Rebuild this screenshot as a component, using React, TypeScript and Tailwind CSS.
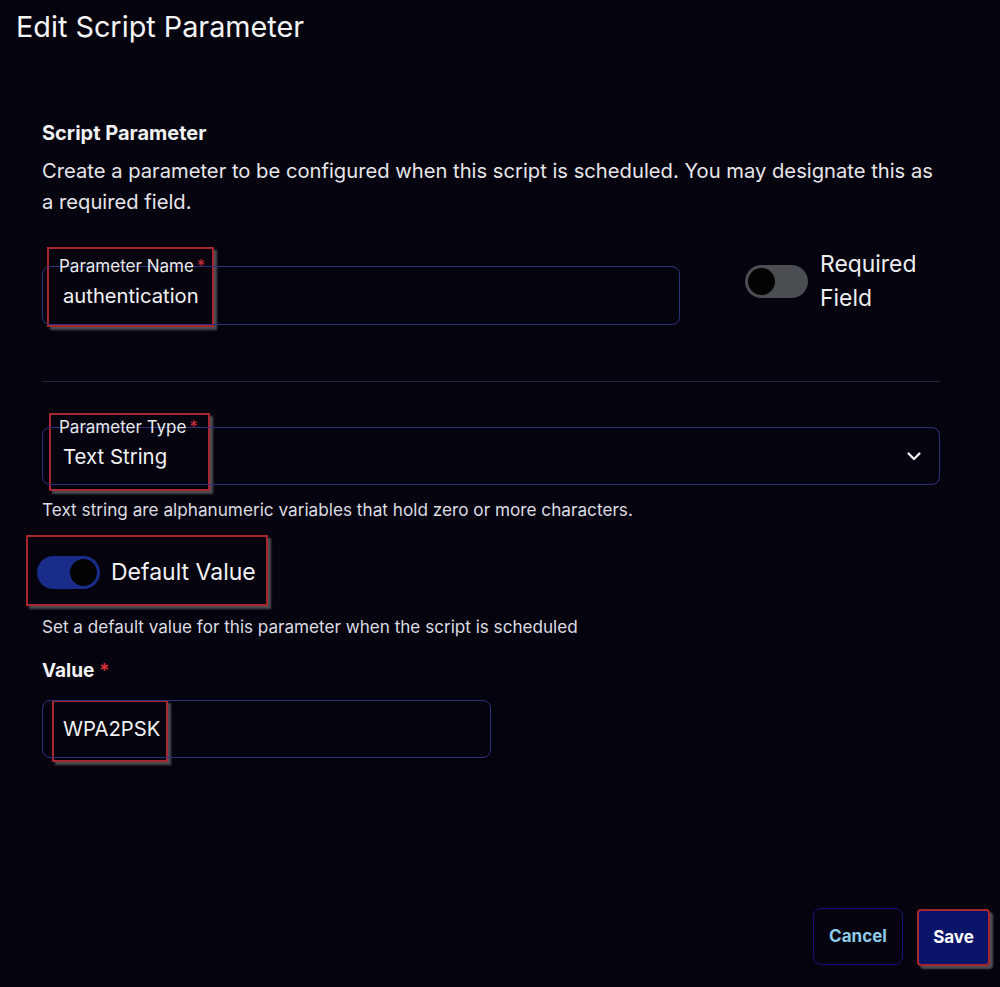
import React from "react";

const font = { fontFamily: "Inter, 'Noto Sans', 'Liberation Sans', sans-serif" };

function Annot({ className }: { className: string }) {
  return (
    <div
      className={`absolute border-2 border-[#a8262f] bg-[#05040e] shadow-[3px_3px_2px_rgba(90,90,95,0.85)] ${className}`}
    />
  );
}

export default function App() {
  return (
    <div className="relative w-[1000px] h-[987px] bg-[#05040e] text-[#f2f2f4] overflow-hidden" style={font}>
      {/* annotation boxes (under text) */}
      <Annot className="left-[47px] top-[247px] w-[167px] h-[80px]" />
      <Annot className="left-[49px] top-[413px] w-[161px] h-[78px]" />
      <Annot className="left-[26px] top-[535px] w-[242px] h-[71px]" />
      <Annot className="left-[52px] top-[700px] w-[116px] h-[62px]" />

      <div className="relative z-10">
        <h1 className="pl-[16px] pt-[10px] text-[28.8px] leading-[34px] font-normal text-[#f4f4f6]">
          Edit Script Parameter
        </h1>

        <div className="pl-[42px] pr-[60px]">
          <div className="mt-[77px] text-[20px] leading-[24px] font-bold">Script Parameter</div>
          <p className="mt-[10px] text-[20.2px] leading-[31px] text-[#e6e6ea] w-[898px]">
            Create a parameter to be configured when this script is scheduled. You may designate this as a required field.
          </p>

          {/* Parameter name row */}
          <div className="mt-[30px] flex items-start">
            <div className="mt-[19px] relative w-[638px] h-[59px] rounded-[8px] border border-[#2c327a]">
              <span className="absolute left-[12px] top-[-11px] px-[4px] text-[17px] leading-[20px] text-[#e8e8ec]">
                Parameter Name<span className="text-[#d0313c] ml-[3px]">*</span>
              </span>
              <div className="pl-[20px] pt-[17px] text-[20.2px] leading-[24px]">authentication</div>
            </div>
            <div className="ml-[65px] flex items-center gap-[12px]">
              <div className="w-[63px] h-[33px] rounded-full bg-[#4a4d52] flex items-center pl-[3px]">
                <div className="w-[27px] h-[27px] rounded-full bg-[#030303]" />
              </div>
              <div className="text-[22.9px] leading-[34px] text-[#eeeef0]">
                Required
                <br />
                Field
              </div>
            </div>
          </div>

          <div className="mt-[56px] w-[898px] border-t border-[#26243a]" />

          {/* Parameter type */}
          <div className="mt-[45px] relative w-[898px] h-[58px] rounded-[8px] border border-[#2c327a] flex items-center">
            <span className="absolute left-[12px] top-[-11px] px-[4px] text-[17px] leading-[20px] text-[#e8e8ec]">
              Parameter Type<span className="text-[#d0313c] ml-[3px]">*</span>
            </span>
            <div className="pl-[20px] pt-[2px] text-[20.4px] leading-[24px] flex-1">Text String</div>
            <svg className="mr-[17px]" width="16" height="16" viewBox="0 0 16 16" fill="none">
              <path d="M2.5 5.5 L8 11 L13.5 5.5" stroke="#ffffff" strokeWidth="2.2" strokeLinecap="round" strokeLinejoin="round" />
            </svg>
          </div>
          <p className="mt-[15px] text-[17.2px] leading-[20px] text-[#dcdce2]">
            Text string are alphanumeric variables that hold zero or more characters.
          </p>

          {/* Default value toggle */}
          <div className="mt-[35px] ml-[-5px] flex items-center gap-[11px] h-[34px]">
            <div className="w-[63px] h-[33px] rounded-full bg-[#1a2c8a] flex items-center justify-end pr-[3px]">
              <div className="w-[27px] h-[27px] rounded-full bg-[#030303]" />
            </div>
            <span className="text-[23px] leading-[30px] text-[#f2f2f4]">Default Value</span>
          </div>
          <p className="mt-[28px] text-[17.1px] leading-[20px] text-[#dcdce2]">
            Set a default value for this parameter when the script is scheduled
          </p>

          <div className="mt-[22px] text-[19px] leading-[24px] font-bold">
            Value <span className="text-[#d0313c]">*</span>
          </div>
          <div className="mt-[17px] w-[449px] h-[58px] rounded-[8px] border border-[#2c327a] flex items-center">
            <span className="pl-[20px] text-[20.3px] leading-[24px]">WPA2PSK</span>
          </div>
        </div>

        {/* buttons */}
        <div className="mt-[150px] pr-[10px] flex justify-end items-start gap-[14px]">
          <button className="w-[90px] h-[57px] rounded-[8px] border border-[#12127a] bg-[#05040e] text-[17px] font-bold text-[#8ecbe8]">
            Cancel
          </button>
          <div className="relative mt-[1px]">
            <div className="absolute inset-0 border-2 border-[#a8262f] rounded-[4px] shadow-[3px_3px_2px_rgba(90,90,95,0.85)]" />
            <button className="w-[73px] h-[57px] rounded-[6px] bg-[#0a1468] text-[17px] font-bold text-white">
              Save
            </button>
          </div>
        </div>
      </div>
    </div>
  );
}
